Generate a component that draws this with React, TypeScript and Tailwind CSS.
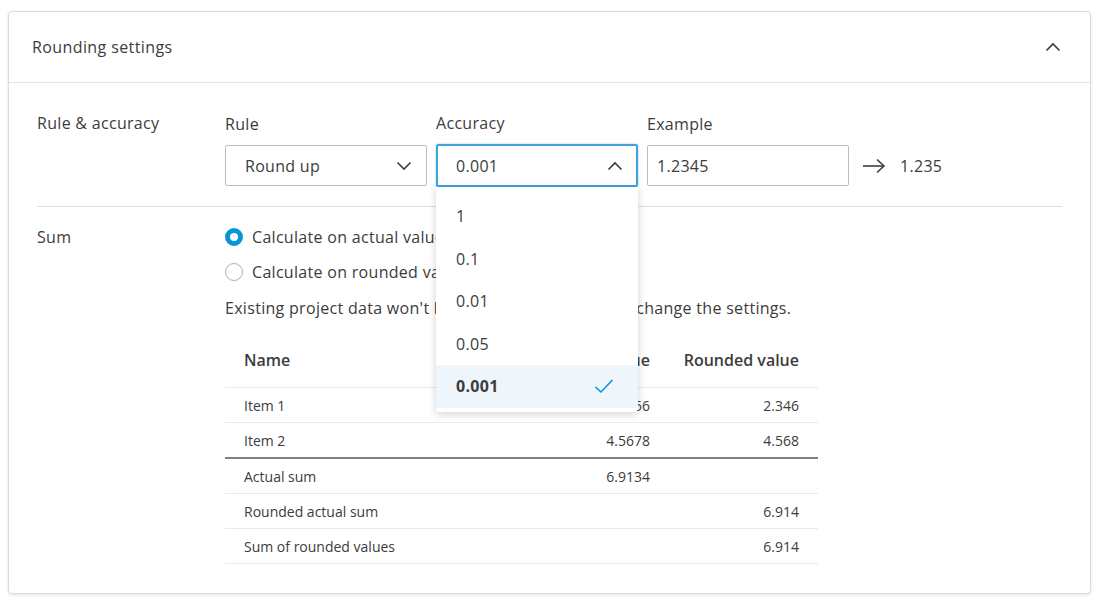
import React from "react";

const font = { fontFamily: "'Open Sans', 'Noto Sans', sans-serif" };

function ChevronUp({ className = "" }: { className?: string }) {
  return (
    <svg className={className} width="16" height="10" viewBox="0 0 16 10" fill="none">
      <polyline points="1.5,8.5 8,2 14.5,8.5" stroke="#3c3c3c" strokeWidth="1.6" />
    </svg>
  );
}
function ChevronDown() {
  return (
    <svg width="16" height="10" viewBox="0 0 16 10" fill="none">
      <polyline points="1.5,1.5 8,8 14.5,1.5" stroke="#3c3c3c" strokeWidth="1.6" />
    </svg>
  );
}

export default function App() {
  const options = ["1", "0.1", "0.01", "0.05", "0.001"];
  const rows = [
    { name: "Item 1", a: "2.3456", r: "2.346" },
    { name: "Item 2", a: "4.5678", r: "4.568" },
  ];
  const sums = [
    { name: "Actual sum", a: "6.9134", r: "" },
    { name: "Rounded actual sum", a: "", r: "6.914" },
    { name: "Sum of rounded values", a: "", r: "6.914" },
  ];
  return (
    <div className="w-[1099px] h-[604px] bg-white pt-[11px] px-[8px] text-[#3c3c3c]" style={font}>
      <div className="relative border border-[#dcdcdc] rounded-[4px] shadow-[0_1px_3px_rgba(0,0,0,0.12)] bg-white">
        <div className="h-[71px] pl-[23px] pr-[29px] flex items-center justify-between border-b border-[#e3e3e3]">
          <span className="text-[16px] leading-[20px] tracking-[0.4px]">Rounding settings</span>
          <ChevronUp />
        </div>
        <div className="px-[28px] tracking-[0.3px]">
          <div className="flex pt-[30px] pb-[20px] border-b border-[#dedede]">
            <div className="w-[188px] text-[16px] leading-[20px]">Rule &amp; accuracy</div>
            <div className="flex gap-[9px] items-end">
              <div className="flex flex-col gap-[11px]">
                <span className="text-[16px] leading-[20px]">Rule</span>
                <div className="w-[202px] h-[41px] border border-[#bdbdbd] rounded-[2px] flex items-center justify-between pl-[19px] pr-[14px] text-[16px]">
                  <span>Round up</span>
                  <ChevronDown />
                </div>
              </div>
              <div className="relative flex flex-col gap-[11px]">
                <span className="text-[16px] leading-[20px]">Accuracy</span>
                <div className="w-[202px] h-[43px] -mb-[1px] border-2 border-[#3fa4dc] rounded-[2px] flex items-center justify-between pl-[18px] pr-[13px] text-[16px] shadow-[0_0_2px_rgba(6,150,215,0.5)]">
                  <span>0.001</span>
                  <ChevronUp />
                </div>
                <div className="absolute left-0 top-[74px] w-[202px] z-10 bg-white rounded-b-[4px] shadow-[0_2px_8px_rgba(0,0,0,0.18)] pt-[8px] pb-[4px]">
                  {options.map((o) => {
                    const sel = o === "0.001";
                    return (
                      <div
                        key={o}
                        className={
                          "h-[42.5px] flex items-center justify-between pl-[20px] pr-[24px] text-[16px] " +
                          (sel ? "bg-[#eef6fc] font-bold" : "")
                        }
                      >
                        <span>{o}</span>
                        {sel && (
                          <svg width="20" height="16" viewBox="0 0 20 16" fill="none">
                            <polyline points="1.5,9 7,14 18.5,2" stroke="#0696d7" strokeWidth="1.6" />
                          </svg>
                        )}
                      </div>
                    );
                  })}
                </div>
              </div>
              <div className="flex flex-col gap-[11px]">
                <span className="text-[16px] leading-[20px]">Example</span>
                <div className="w-[202px] h-[41px] border border-[#bdbdbd] rounded-[2px] flex items-center pl-[9px] text-[16px]">
                  1.2345
                </div>
              </div>
              <div className="h-[41px] flex items-center ml-[4px] gap-[14px]">
                <svg width="24" height="16" viewBox="0 0 24 16" fill="none">
                  <line x1="1" y1="8" x2="22" y2="8" stroke="#3c3c3c" strokeWidth="1.6" />
                  <polyline points="15,1.5 22,8 15,14.5" stroke="#3c3c3c" strokeWidth="1.6" />
                </svg>
                <span className="text-[16px]">1.235</span>
              </div>
            </div>
          </div>
          <div className="flex pt-[20px] pb-[29px]">
            <div className="w-[188px] text-[16px] leading-[20px]">Sum</div>
            <div className="flex flex-col">
              <div className="flex items-center gap-[9px] h-[20px]">
                <span className="w-[18px] h-[18px] rounded-full border-[5px] border-[#0696d7] bg-white" />
                <span className="text-[16px]">Calculate on actual values</span>
              </div>
              <div className="flex items-center gap-[9px] h-[20px] mt-[15px]">
                <span className="w-[18px] h-[18px] rounded-full border border-[#b0b0b0] bg-white" />
                <span className="text-[16px]">Calculate on rounded values</span>
              </div>
              <div className="text-[16px] leading-[20px] mt-[16px]">
                Existing project data won't be recalculated when you change the settings.
              </div>
              <div className="w-[593px] mt-[14px] text-[14px] tracking-normal">
                <div className="grid grid-cols-[1fr_180px_149px] px-[19px] h-[56px] items-center border-b border-[#eaeaea] font-semibold text-[16px]">
                  <span>Name</span>
                  <span className="text-right">Actual value</span>
                  <span className="text-right">Rounded value</span>
                </div>
                {rows.map((r, i) => (
                  <div
                    key={r.name}
                    className={
                      "grid grid-cols-[1fr_180px_149px] px-[19px] items-center " +
                      (i === rows.length - 1 ? "h-[36px] border-b-2 border-[#808080]" : "h-[35px] border-b border-[#eaeaea]")
                    }
                  >
                    <span>{r.name}</span>
                    <span className="text-right">{r.a}</span>
                    <span className="text-right">{r.r}</span>
                  </div>
                ))}
                {sums.map((r) => (
                  <div
                    key={r.name}
                    className="grid grid-cols-[1fr_180px_149px] px-[19px] h-[35px] items-center border-b border-[#eaeaea]"
                  >
                    <span>{r.name}</span>
                    <span className="text-right">{r.a}</span>
                    <span className="text-right">{r.r}</span>
                  </div>
                ))}
              </div>
            </div>
          </div>
        </div>
      </div>
    </div>
  );
}
